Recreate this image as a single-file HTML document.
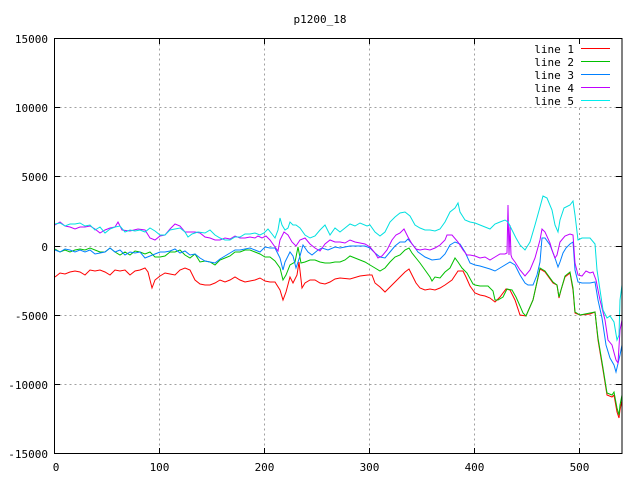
<!DOCTYPE html>
<html><head><meta charset="utf-8"><style>
html,body{margin:0;padding:0;background:#fff;}
svg{display:block;}
text{font-family:"DejaVu Sans Mono","Liberation Mono",monospace;font-size:11px;fill:#000;}
.l polyline{fill:none;stroke-width:1;}
</style></head><body>
<svg width="640" height="480" viewBox="0 0 640 480" xmlns="http://www.w3.org/2000/svg">
<rect width="640" height="480" fill="#fff"/>
<g stroke="#a0a0a0" stroke-width="1" stroke-dasharray="2,3" fill="none">
<line x1="159.5" y1="38.5" x2="159.5" y2="453.5"/>
<line x1="264.5" y1="38.5" x2="264.5" y2="453.5"/>
<line x1="369.5" y1="38.5" x2="369.5" y2="453.5"/>
<line x1="474.5" y1="38.5" x2="474.5" y2="453.5"/>
<line x1="579.5" y1="108" x2="579.5" y2="453.5"/>
<line x1="54.5" y1="107.5" x2="622" y2="107.5"/>
<line x1="54.5" y1="176.5" x2="622" y2="176.5"/>
<line x1="54.5" y1="246.5" x2="622" y2="246.5"/>
<line x1="54.5" y1="315.5" x2="622" y2="315.5"/>
<line x1="54.5" y1="384.5" x2="622" y2="384.5"/>
</g>
<g class="l">
<polyline stroke="#ff0000" points="55,277 60,273 65,274 70,272 75,271 80,272 85,275 90,270 95,271 100,270 105,272 110,275 115,270 120,271 125,270 130,275 135,271 140,270 145,268 148,272 152,288 155,280 160,276 165,273 170,274 175,275 180,270 185,268 190,270 195,280 200,284 205,285 210,285 215,283 220,280 225,282 230,280 235,277 240,280 245,282 250,281 255,280 260,278 265,281 270,282 275,282 280,290 283,300 286,292 290,277 293,283 297,275 299,262 302,288 305,283 310,280 315,280 320,283 325,284 330,282 335,279 340,278 350,279 360,276 368,275 372,275 375,283 380,287 385,292 390,287 395,282 400,277 405,272 409,269 412,275 416,283 420,288 425,290 430,289 435,290 440,288 445,285 452,280 458,271 463,271 466,277 470,286 475,293 480,295 485,296 490,298 495,302 500,297 506,289 510,290 515,300 520,315 526,316 533,300 540,269 545,272 553,283 557,285 559,298 561,290 565,277 570,273 573,290 575,313 580,315 590,314 595,312 598,340 603,370 607,395 612,397 614,395 617,412 619,418 620,410 622,400"/>
<polyline stroke="#00c000" points="55,249 60,252 65,250 70,252 75,250 80,249 85,250 90,248 95,250 100,252 105,252 110,248 115,252 120,255 125,252 130,255 135,251 140,252 145,254 150,252 155,257 160,257 165,256 170,252 175,252 180,250 185,255 190,258 195,254 200,262 205,261 210,262 215,265 220,260 225,258 230,256 235,252 240,252 245,250 250,250 255,252 260,254 265,257 270,257 275,261 280,268 283,280 286,275 290,265 295,262 298,247 301,263 305,262 310,260 315,260 320,262 325,263 330,263 335,262 340,262 345,260 350,256 355,258 360,260 365,262 370,265 375,268 380,271 385,268 390,262 395,257 400,255 405,250 409,248 412,253 416,258 420,263 425,270 430,277 432,281 435,277 440,278 445,272 450,268 455,258 458,262 462,268 467,273 473,284 475,285 480,286 488,286 493,291 495,300 498,300 503,297 507,289 512,290 516,297 520,306 523,313 526,316 533,300 540,268 545,271 553,282 557,285 559,297 561,290 565,276 570,272 573,288 575,312 580,315 590,313 595,312 598,338 603,368 607,393 612,395 614,392 617,408 619,415 620,405 622,395"/>
<polyline stroke="#0080ff" points="55,250 60,252 65,249 70,250 75,252 80,250 85,252 90,250 95,254 100,253 105,252 110,248 115,252 120,250 125,255 130,252 135,253 140,252 145,258 150,256 155,254 160,252 165,252 170,251 175,249 180,253 185,251 190,255 195,254 200,258 205,261 210,262 215,263 220,259 225,256 230,253 235,250 240,250 245,249 250,248 255,250 260,252 265,247 270,248 275,248 280,258 283,270 285,262 290,252 293,256 296,268 300,256 303,245 308,252 312,255 318,250 322,248 328,250 335,247 340,248 345,247 350,246 358,246 365,246 370,248 375,253 380,257 385,258 390,252 395,246 400,242 405,242 408,239 413,245 418,252 425,257 432,260 440,259 445,254 450,245 455,242 460,244 465,252 470,263 475,265 480,266 490,269 495,271 500,268 510,262 515,265 520,275 525,283 528,285 533,285 537,275 540,262 542,238 545,238 550,245 555,258 558,267 560,262 563,253 566,248 570,244 573,242 575,270 578,282 582,283 590,283 595,282 598,300 602,318 606,345 610,358 614,365 616,372 620,355 622,345"/>
<polyline stroke="#c000ff" points="55,225 60,222 65,226 70,227 75,229 80,227 85,227 90,226 95,229 100,233 105,230 110,228 115,227 118,222 122,230 130,231 138,229 145,230 150,238 155,240 160,236 165,235 170,229 175,224 180,226 185,232 190,232 195,232 200,233 205,237 210,238 215,240 220,240 225,238 230,239 235,236 240,238 245,238 250,237 255,238 258,236 262,238 266,236 270,240 275,247 278,251 280,240 284,232 288,235 292,242 296,246 300,240 305,238 310,244 315,248 320,251 325,244 330,240 335,242 340,242 345,243 350,240 355,242 360,243 365,244 370,247 375,253 378,258 382,256 387,250 392,240 396,235 400,233 404,229 408,237 412,244 416,249 420,250 425,249 430,250 435,248 440,245 445,240 447,235 452,235 458,242 463,250 467,255 470,255 475,256 480,258 485,257 490,260 495,257 500,254 505,254 507,253 508,205 509,255 510,225 511,255 512,258 515,262 520,270 525,276 530,270 535,258 540,240 542,229 545,232 550,243 552,250 555,258 557,255 560,242 565,236 570,234 573,235 575,263 578,275 582,276 586,271 590,273 593,272 596,280 600,300 605,320 608,340 612,345 616,360 618,363 620,330 622,320"/>
<polyline stroke="#00e0e0" points="55,224 60,223 65,226 70,224 75,224 80,223 85,226 90,225 95,230 100,227 105,233 110,229 115,227 120,226 125,232 130,230 135,231 140,230 145,232 150,228 155,231 160,235 165,235 170,230 180,228 185,232 188,237 192,234 198,232 205,233 210,230 215,235 220,238 225,240 230,240 235,237 240,237 245,234 250,234 255,233 260,235 264,233 268,229 272,234 275,238 278,230 280,218 282,225 285,230 288,228 290,222 293,225 296,225 300,228 305,235 310,238 315,236 320,230 325,225 330,235 335,228 340,232 345,228 350,224 355,226 360,223 367,226 370,225 375,232 380,236 385,232 390,222 395,217 400,213 405,212 410,216 415,225 420,228 425,230 430,230 435,231 440,229 445,222 450,212 455,208 458,203 460,212 465,220 470,222 475,223 480,225 485,227 490,229 495,224 500,222 505,220 508,222 512,230 516,238 520,245 525,250 530,242 535,225 540,207 543,196 547,198 552,210 555,225 558,232 560,220 564,208 570,205 573,201 575,215 578,240 582,238 590,238 595,244 597,270 600,290 603,310 607,318 610,316 614,322 617,340 619,335 620,300 622,285"/>
</g>
<rect x="54.5" y="38.5" width="567.5" height="415" fill="none" stroke="#000" stroke-width="1"/>
<g stroke="#000" stroke-width="1">
<line x1="54.5" y1="107.5" x2="60" y2="107.5"/><line x1="616" y1="107.5" x2="622" y2="107.5"/>
<line x1="54.5" y1="176.5" x2="60" y2="176.5"/><line x1="616" y1="176.5" x2="622" y2="176.5"/>
<line x1="54.5" y1="246.5" x2="60" y2="246.5"/><line x1="616" y1="246.5" x2="622" y2="246.5"/>
<line x1="54.5" y1="315.5" x2="60" y2="315.5"/><line x1="616" y1="315.5" x2="622" y2="315.5"/>
<line x1="54.5" y1="384.5" x2="60" y2="384.5"/><line x1="616" y1="384.5" x2="622" y2="384.5"/>
<line x1="159.5" y1="38.5" x2="159.5" y2="44"/><line x1="159.5" y1="448" x2="159.5" y2="453.5"/>
<line x1="264.5" y1="38.5" x2="264.5" y2="44"/><line x1="264.5" y1="448" x2="264.5" y2="453.5"/>
<line x1="369.5" y1="38.5" x2="369.5" y2="44"/><line x1="369.5" y1="448" x2="369.5" y2="453.5"/>
<line x1="474.5" y1="38.5" x2="474.5" y2="44"/><line x1="474.5" y1="448" x2="474.5" y2="453.5"/>
<line x1="579.5" y1="38.5" x2="579.5" y2="44"/><line x1="579.5" y1="448" x2="579.5" y2="453.5"/>
</g>
<text x="320" y="23" text-anchor="middle">p1200_18</text>
<g text-anchor="end">
<text x="48" y="43">15000</text>
<text x="48" y="112">10000</text>
<text x="48" y="181">5000</text>
<text x="48" y="251">0</text>
<text x="48" y="320">-5000</text>
<text x="48" y="389">-10000</text>
<text x="48" y="458">-15000</text>
</g>
<g text-anchor="middle">
<text x="56" y="471">0</text>
<text x="159.5" y="471">100</text>
<text x="264.5" y="471">200</text>
<text x="369.5" y="471">300</text>
<text x="474.5" y="471">400</text>
<text x="579.5" y="471">500</text>
</g>
<g text-anchor="end">
<text x="574" y="53">line 1</text>
<text x="574" y="66">line 2</text>
<text x="574" y="79">line 3</text>
<text x="574" y="92">line 4</text>
<text x="574" y="105">line 5</text>
</g>
<g stroke-width="1">
<line x1="581" y1="48.5" x2="610" y2="48.5" stroke="#ff0000"/>
<line x1="581" y1="61.5" x2="610" y2="61.5" stroke="#00c000"/>
<line x1="581" y1="74.5" x2="610" y2="74.5" stroke="#0080ff"/>
<line x1="581" y1="87.5" x2="610" y2="87.5" stroke="#c000ff"/>
<line x1="581" y1="100.5" x2="610" y2="100.5" stroke="#00eeee"/>
</g>
</svg>
</body></html>
